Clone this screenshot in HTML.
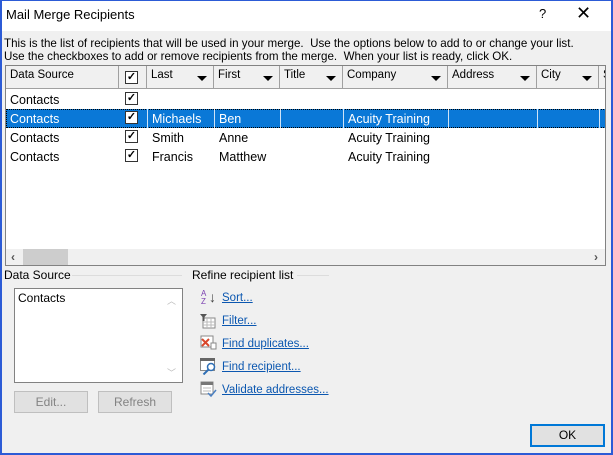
<!DOCTYPE html>
<html><head><style>
*{margin:0;padding:0;box-sizing:border-box}
body{width:613px;height:455px;overflow:hidden;font-family:"Liberation Sans",sans-serif;font-size:12px;color:#000}
.win{position:absolute;left:0;top:0;width:613px;height:455px;background:#f0f0f0}
.frame{position:absolute;left:0;top:0;width:613px;height:455px;border:2px solid #2c5bd6;border-top:1px solid #2c5bd6}
.title{position:absolute;left:0;top:0;width:613px;height:31px;background:#fff}
.a{position:absolute;white-space:nowrap}
.list{position:absolute;left:5px;top:65px;width:601px;height:201px;background:#fff;border:1px solid #828282;overflow:hidden}
.hdr{position:absolute;top:0;height:23px;background:#f0f0f0;border-right:1px solid #a0a0a0;border-bottom:1px solid #a0a0a0;padding:3px 0 0 4px;font-size:11.5px}
.dd{position:absolute;right:6px;top:10px;width:0;height:0;border-left:5px solid transparent;border-right:5px solid transparent;border-top:5px solid #000}
.cb{position:absolute;width:13px;height:13px;border:1px solid #333;background:#fff;font-size:11px;line-height:11px;text-align:center;font-weight:bold}
.row{position:absolute;left:0;width:600px;height:19px}
.cell{position:absolute;top:3px;font-size:12.5px}
.vl{position:absolute;top:0;width:1px;height:19px;background:#e8e8e8}
.sel .vl{background:#cfe3f7}
.lnk{color:#0b57b0;text-decoration:underline;font-size:11.5px}
.btn{position:absolute;height:22px;border:1px solid #bfbfbf;background:#e1e1e1;color:#838383;text-align:center;line-height:20px;font-size:12px}
</style></head><body>
<div class="win">
<div class="title"></div>
<div class="a" style="left:6px;top:7px;font-size:13px">Mail Merge Recipients</div>
<div class="a" style="left:539px;top:6px;font-size:13px">?</div>
<div class="a" style="left:576px;top:3px;font-size:18px;font-weight:300">✕</div>
<div class="a" style="left:4px;top:37px;font-size:11.6px;line-height:13px">This is the list of recipients that will be used in your merge.&nbsp; Use the options below to add to or change your list.<br>Use the checkboxes to add or remove recipients from the merge.&nbsp; When your list is ready, click OK.</div>

<div class="list">
 <div class="hdr" style="left:0;width:113px">Data Source</div>
 <div class="hdr" style="left:113px;width:28px"><div class="cb" style="left:6px;top:5px">✓</div></div>
 <div class="hdr" style="left:141px;width:67px">Last<div class="dd"></div></div>
 <div class="hdr" style="left:208px;width:66px">First<div class="dd"></div></div>
 <div class="hdr" style="left:274px;width:63px">Title<div class="dd"></div></div>
 <div class="hdr" style="left:337px;width:105px">Company<div class="dd"></div></div>
 <div class="hdr" style="left:442px;width:89px">Address<div class="dd"></div></div>
 <div class="hdr" style="left:531px;width:62px">City<div class="dd"></div></div>
 <div class="hdr" style="left:593px;width:20px">S</div>

 <div class="row" style="top:24px"><span class="cell" style="left:4px">Contacts</span><div class="cb" style="left:119px;top:2px">✓</div></div>
 <div class="row sel" style="top:43px;background:#0a78d7;color:#fff;outline:1px dotted #000;outline-offset:-1px"><span class="cell" style="left:4px">Contacts</span><div class="cb" style="left:119px;top:2px;color:#000">✓</div><div class="vl" style="left:141px"></div><span class="cell" style="left:146px">Michaels</span><div class="vl" style="left:208px"></div><span class="cell" style="left:213px">Ben</span><div class="vl" style="left:274px"></div><div class="vl" style="left:337px"></div><span class="cell" style="left:342px">Acuity Training</span><div class="vl" style="left:442px"></div><div class="vl" style="left:531px"></div><div class="vl" style="left:593px"></div></div>
 <div class="row" style="top:62px"><span class="cell" style="left:4px">Contacts</span><div class="cb" style="left:119px;top:2px">✓</div><span class="cell" style="left:146px">Smith</span><span class="cell" style="left:213px">Anne</span><span class="cell" style="left:342px">Acuity Training</span></div>
 <div class="row" style="top:81px"><span class="cell" style="left:4px">Contacts</span><div class="cb" style="left:119px;top:2px">✓</div><span class="cell" style="left:146px">Francis</span><span class="cell" style="left:213px">Matthew</span><span class="cell" style="left:342px">Acuity Training</span></div>
 <div style="position:absolute;left:0;top:183px;width:600px;height:17px;background:#f0f0f0"></div>
 <div style="position:absolute;left:17px;top:183px;width:45px;height:17px;background:#cdcdcd"></div>
 <div class="a" style="left:5px;top:184px;font-size:12px;font-weight:bold;color:#555">‹</div>
 <div class="a" style="left:588px;top:184px;font-size:12px;font-weight:bold;color:#555">›</div>
</div>

<div class="a" style="left:4px;top:268px;font-size:12px">Data Source</div>
<div style="position:absolute;left:72px;top:275px;width:110px;height:1px;background:#dcdcdc"></div>
<div style="position:absolute;left:14px;top:288px;width:169px;height:95px;background:#fff;border:1px solid #828282"></div>
<div class="a" style="left:18px;top:291px;font-size:12px">Contacts</div>
<div class="a" style="left:167px;top:294px;font-size:9px;color:#bbb">︿</div>
<div class="a" style="left:167px;top:366px;font-size:9px;color:#bbb">﹀</div>
<div class="btn" style="left:14px;top:391px;width:74px">Edit...</div>
<div class="btn" style="left:98px;top:391px;width:74px">Refresh</div>

<div class="a" style="left:192px;top:268px;font-size:12px">Refine recipient list</div>
<div style="position:absolute;left:297px;top:275px;width:32px;height:1px;background:#dcdcdc"></div>

<div class="a" style="left:201px;top:290px;font-size:8px;line-height:8px;color:#7a3fb0">A<br>Z</div>
<div class="a" style="left:209px;top:289px;font-size:14px;color:#444">↓</div>
<div class="a lnk" style="left:222px;top:292px">Sort...</div>

<svg class="a" style="left:200px;top:313px" width="16" height="16"><rect x="3" y="5" width="12" height="10" fill="#fff" stroke="#888"/><path d="M3 9h12M3 12h12M7 5v10M11 5v10" stroke="#bbb"/><path d="M0 1h7l-2.5 3v4h-2v-4z" fill="#555"/></svg>
<div class="a lnk" style="left:222px;top:315px">Filter...</div>

<svg class="a" style="left:200px;top:335px" width="17" height="16"><rect x="1" y="1" width="12" height="11" fill="#fff" stroke="#888"/><path d="M2 4l7 7M9 4l-7 7" stroke="#d9472b" stroke-width="2"/><rect x="11" y="8" width="5" height="6" fill="#fff" stroke="#888"/></svg>
<div class="a lnk" style="left:222px;top:338px">Find duplicates...</div>

<svg class="a" style="left:200px;top:358px" width="17" height="17"><rect x="0.5" y="0.5" width="14" height="12" fill="#fff" stroke="#888"/><rect x="0" y="0" width="15" height="3" fill="#666"/><circle cx="11" cy="9" r="3.5" fill="#fff" stroke="#2f6fb5" stroke-width="1.5"/><path d="M8.5 11.5l-5 5" stroke="#2f6fb5" stroke-width="2"/></svg>
<div class="a lnk" style="left:222px;top:361px">Find recipient...</div>

<svg class="a" style="left:200px;top:381px" width="17" height="17"><rect x="1" y="1" width="12" height="12" fill="#fff" stroke="#888"/><rect x="1" y="1" width="12" height="3" fill="#777"/><path d="M3 7h8M3 10h8" stroke="#bbb"/><path d="M8 12l3 3 5-6" stroke="#4a7fc1" stroke-width="1.5" fill="none"/></svg>
<div class="a lnk" style="left:222px;top:384px">Validate addresses...</div>

<div class="btn" style="left:530px;top:424px;width:75px;height:23px;border:2px solid #0078d7;color:#000;line-height:19px">OK</div>
<div class="frame"></div>
</div>
</body></html>
